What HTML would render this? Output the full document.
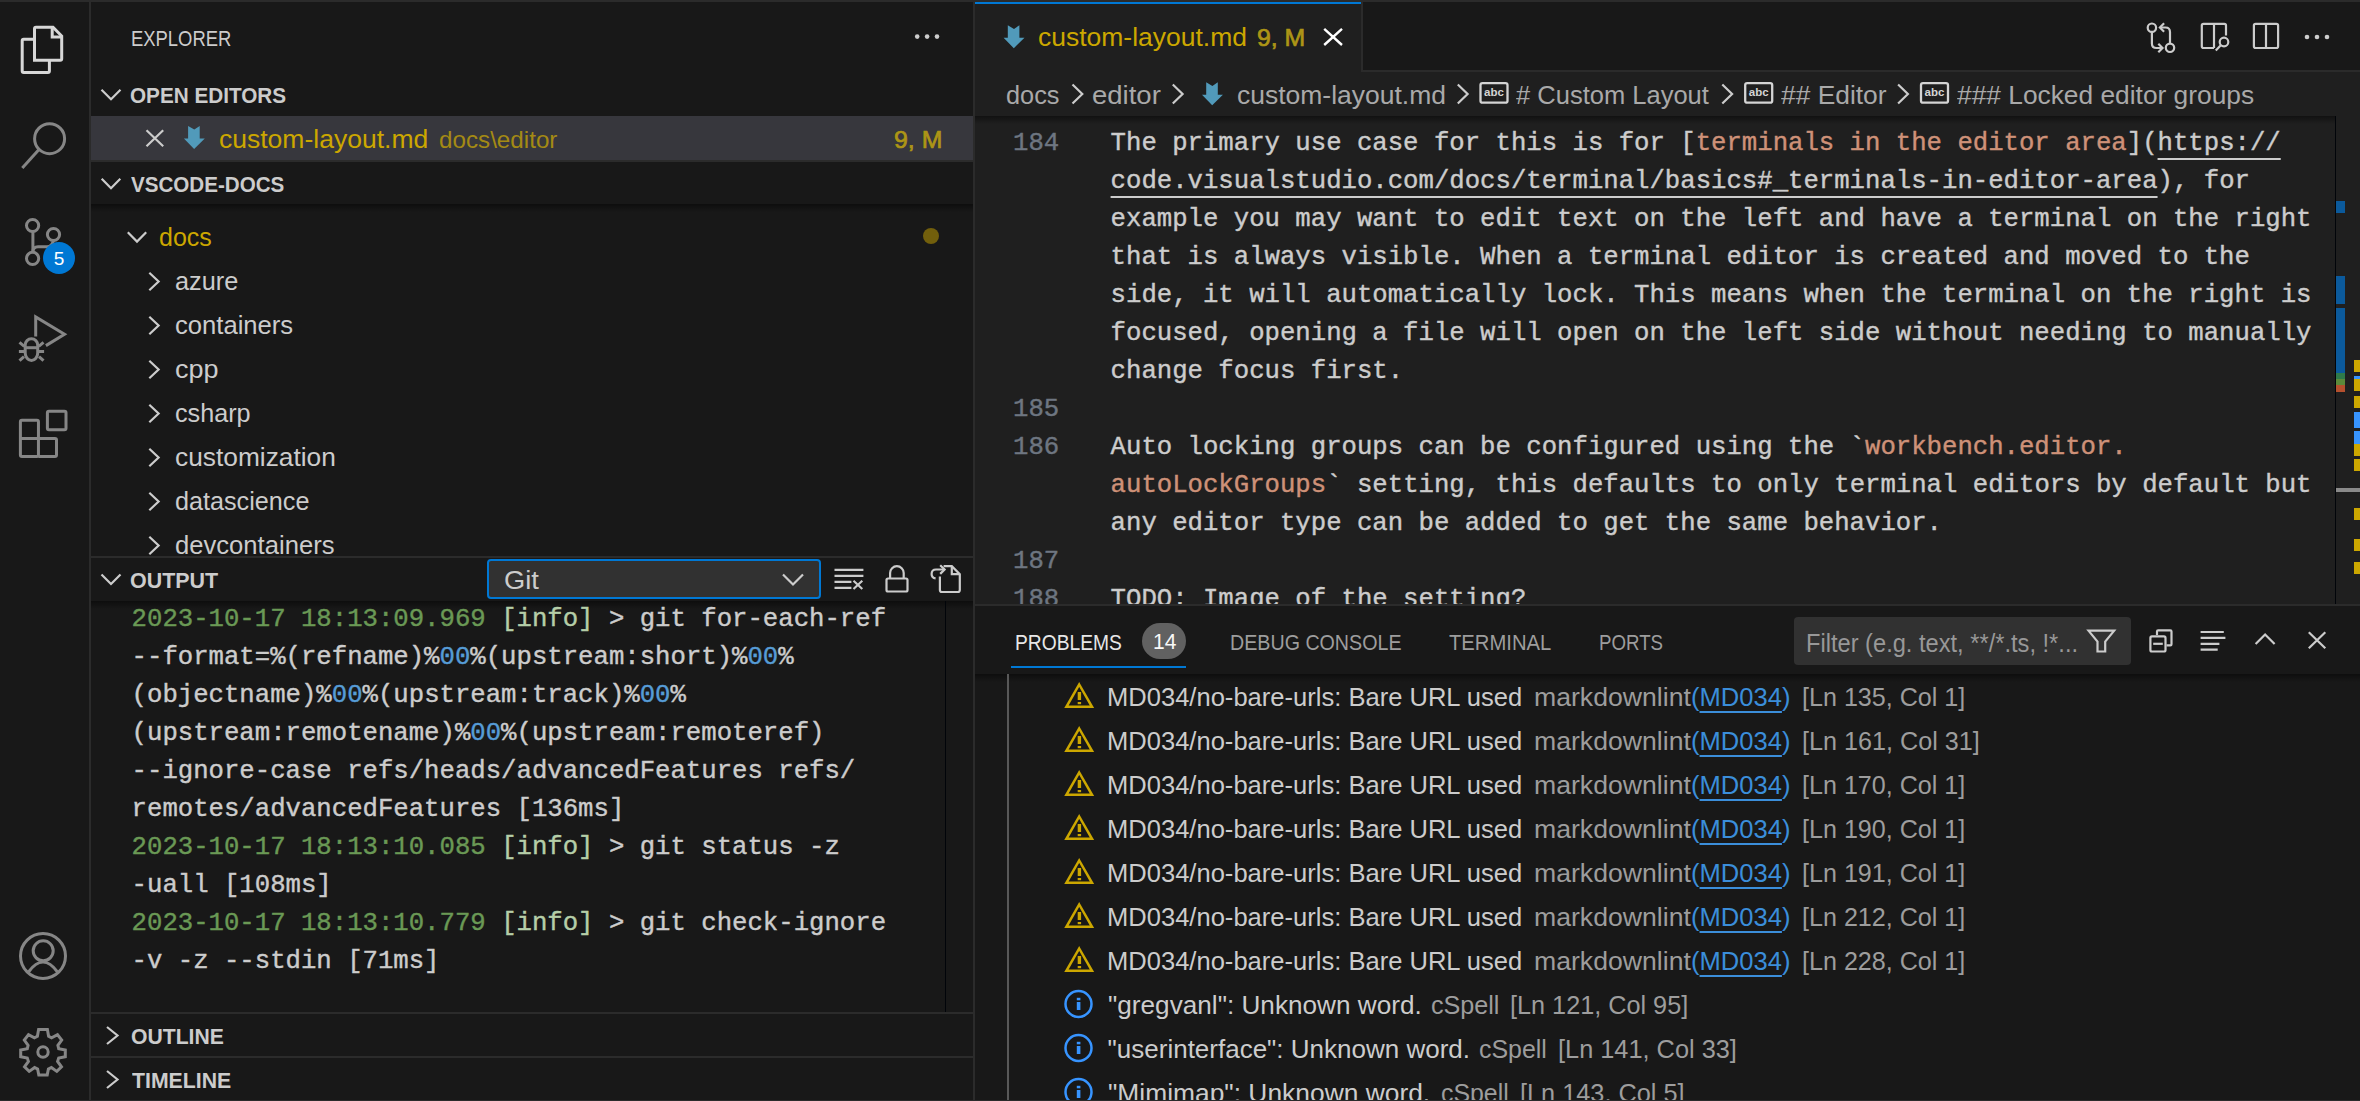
<!DOCTYPE html>
<html>
<head>
<meta charset="utf-8">
<style>
html,body{margin:0;padding:0}
body{width:2360px;height:1101px;overflow:hidden;background:#181818;position:relative;font-family:"Liberation Sans",sans-serif}
.r{position:absolute}
.t{position:absolute;white-space:pre;transform-origin:0 0}
.m{position:absolute;white-space:pre;font-family:"Liberation Mono",monospace;font-size:25.662px;line-height:38px;color:#cccccc;-webkit-text-stroke:0.4px currentColor}
.ln{color:#6e7681}
svg{position:absolute;left:0;top:0}
</style>
</head>
<body>
<!-- activity bar / top strip -->
<div class="r" style="left:0;top:0;width:2360px;height:2px;background:#2b2b2b"></div>
<div class="r" style="left:89px;top:2px;width:2px;height:1099px;background:#2b2b2b"></div>
<div class="r" style="left:973px;top:2px;width:2px;height:1099px;background:#2b2b2b"></div>

<!-- sidebar -->
<div class="r" style="left:91px;top:116px;width:882px;height:44px;background:#37373d"></div>
<div class="r" style="left:91px;top:160px;width:882px;height:2px;background:#2b2b2b"></div>
<div class="r" style="left:91px;top:204px;width:882px;height:8px;background:linear-gradient(rgba(0,0,0,0.45),rgba(0,0,0,0))"></div>
<div class="r" style="left:91px;top:556px;width:882px;height:2px;background:#2b2b2b"></div>
<div class="r" style="left:487px;top:559px;width:334px;height:40px;box-sizing:border-box;background:#313131;border:2px solid #0078d4;border-radius:4px"></div>
<div class="r" style="left:91px;top:601px;width:882px;height:8px;background:linear-gradient(rgba(0,0,0,0.45),rgba(0,0,0,0))"></div>
<div class="r" style="left:945px;top:601px;width:1px;height:411px;background:#010409"></div>
<div class="r" style="left:91px;top:1012px;width:882px;height:2px;background:#2b2b2b"></div>
<div class="r" style="left:91px;top:1056px;width:882px;height:2px;background:#2b2b2b"></div>

<!-- editor -->
<div class="r" style="left:975px;top:2px;width:386px;height:70px;background:#1f1f1f"></div>
<div class="r" style="left:975px;top:2px;width:386px;height:2px;background:#0078d4"></div>
<div class="r" style="left:1361px;top:2px;width:2px;height:70px;background:#2b2b2b"></div>
<div class="r" style="left:1363px;top:70px;width:997px;height:2px;background:#2b2b2b"></div>
<div class="r" style="left:975px;top:72px;width:1385px;height:532px;background:#1f1f1f"></div>
<div class="r" style="left:975px;top:116px;width:1360px;height:8px;background:linear-gradient(rgba(0,0,0,0.45),rgba(0,0,0,0))"></div>
<div class="r" style="left:2335px;top:116px;width:1px;height:488px;background:#010409"></div>
<!-- overview ruler marks -->
<div class="r" style="left:2336px;top:201px;width:9px;height:12px;background:#0b5a9c"></div>
<div class="r" style="left:2336px;top:276px;width:9px;height:28px;background:#0b5a9c"></div>
<div class="r" style="left:2336px;top:308px;width:9px;height:65px;background:#0b5a9c"></div>
<div class="r" style="left:2336px;top:373px;width:9px;height:6px;background:#2e7a4a"></div>
<div class="r" style="left:2336px;top:379px;width:9px;height:6px;background:#5b8a3a"></div>
<div class="r" style="left:2336px;top:385px;width:9px;height:7px;background:#b5502e"></div>
<div class="r" style="left:2354px;top:360px;width:6px;height:12px;background:#cca700"></div>
<div class="r" style="left:2354px;top:376px;width:6px;height:3px;background:#3794ff"></div>
<div class="r" style="left:2354px;top:379px;width:6px;height:12px;background:#cca700"></div>
<div class="r" style="left:2354px;top:396px;width:6px;height:12px;background:#cca700"></div>
<div class="r" style="left:2354px;top:412px;width:6px;height:16px;background:#3794ff"></div>
<div class="r" style="left:2354px;top:431px;width:6px;height:13px;background:#3794ff"></div>
<div class="r" style="left:2354px;top:444px;width:6px;height:12px;background:#cca700"></div>
<div class="r" style="left:2354px;top:459px;width:6px;height:12px;background:#cca700"></div>
<div class="r" style="left:2354px;top:508px;width:6px;height:12px;background:#cca700"></div>
<div class="r" style="left:2354px;top:539px;width:6px;height:12px;background:#cca700"></div>
<div class="r" style="left:2354px;top:562px;width:6px;height:12px;background:#cca700"></div>
<div class="r" style="left:2336px;top:488px;width:24px;height:4px;background:#8a8a8a"></div>

<!-- panel -->
<div class="r" style="left:975px;top:604px;width:1385px;height:2px;background:#2b2b2b"></div>
<div class="r" style="left:975px;top:606px;width:1385px;height:495px;background:#181818"></div>
<div class="r" style="left:1794px;top:617px;width:337px;height:48px;background:#313131;border-radius:4px"></div>
<div class="r" style="left:1011px;top:666px;width:175px;height:2px;background:#0078d4"></div>
<div class="r" style="left:1142px;top:623px;width:44px;height:36px;border-radius:18px;background:#616161"></div>
<div class="r" style="left:975px;top:674px;width:1385px;height:8px;background:linear-gradient(rgba(0,0,0,0.45),rgba(0,0,0,0))"></div>
<div class="r" style="left:1007px;top:674px;width:2px;height:427px;background:#585858"></div>

<div class="t" style="left:131.36px;top:28.30px;font-family:'Liberation Sans', sans-serif;font-size:22px;font-weight:400;line-height:22px;color:#cccccc;transform:scaleX(0.8373);">EXPLORER</div>
<div class="t" style="left:130.36px;top:85.10px;font-family:'Liberation Sans', sans-serif;font-size:22px;font-weight:700;line-height:22px;color:#cccccc;transform:scaleX(0.9412);">OPEN EDITORS</div>
<div class="t" style="left:218.58px;top:126.00px;font-family:'Liberation Sans', sans-serif;font-size:26px;font-weight:400;line-height:26px;color:#cca700;transform:scaleX(1.0197);">custom-layout.md</div>
<div class="t" style="left:438.99px;top:128.00px;font-family:'Liberation Sans', sans-serif;font-size:24px;font-weight:400;line-height:24px;color:#a48a14;transform:scaleX(1.0085);">docs\editor</div>
<div class="t" style="left:893.76px;top:127.60px;font-family:'Liberation Sans', sans-serif;font-size:24px;font-weight:400;line-height:24px;color:#ad9516;transform:scaleX(1.0364);-webkit-text-stroke:0.7px #ad9516;">9, M</div>
<div class="t" style="left:131.00px;top:173.80px;font-family:'Liberation Sans', sans-serif;font-size:22px;font-weight:700;line-height:22px;color:#cccccc;transform:scaleX(0.9362);">VSCODE-DOCS</div>
<div class="t" style="left:158.64px;top:223.60px;font-family:'Liberation Sans', sans-serif;font-size:26px;font-weight:400;line-height:26px;color:#cca700;transform:scaleX(0.9611);">docs</div>
<div class="t" style="left:174.73px;top:267.60px;font-family:'Liberation Sans', sans-serif;font-size:26px;font-weight:400;line-height:26px;color:#cccccc;transform:scaleX(0.9730);">azure</div>
<div class="t" style="left:174.72px;top:311.60px;font-family:'Liberation Sans', sans-serif;font-size:26px;font-weight:400;line-height:26px;color:#cccccc;transform:scaleX(0.9849);">containers</div>
<div class="t" style="left:174.66px;top:355.60px;font-family:'Liberation Sans', sans-serif;font-size:26px;font-weight:400;line-height:26px;color:#cccccc;transform:scaleX(1.0375);">cpp</div>
<div class="t" style="left:174.73px;top:399.60px;font-family:'Liberation Sans', sans-serif;font-size:26px;font-weight:400;line-height:26px;color:#cccccc;transform:scaleX(0.9684);">csharp</div>
<div class="t" style="left:174.69px;top:443.60px;font-family:'Liberation Sans', sans-serif;font-size:26px;font-weight:400;line-height:26px;color:#cccccc;transform:scaleX(1.0121);">customization</div>
<div class="t" style="left:174.73px;top:487.60px;font-family:'Liberation Sans', sans-serif;font-size:26px;font-weight:400;line-height:26px;color:#cccccc;transform:scaleX(0.9686);">datascience</div>
<div class="t" style="left:174.71px;top:531.60px;font-family:'Liberation Sans', sans-serif;font-size:26px;font-weight:400;line-height:26px;color:#cccccc;transform:scaleX(0.9851);">devcontainers</div>
<div class="t" style="left:130.03px;top:569.50px;font-family:'Liberation Sans', sans-serif;font-size:22px;font-weight:700;line-height:22px;color:#cccccc;transform:scaleX(0.9744);">OUTPUT</div>
<div class="t" style="left:504.35px;top:567.00px;font-family:'Liberation Sans', sans-serif;font-size:26px;font-weight:400;line-height:26px;color:#cccccc;transform:scaleX(1.0500);">Git</div>
<div class="t" style="left:131.04px;top:1026.40px;font-family:'Liberation Sans', sans-serif;font-size:22px;font-weight:700;line-height:22px;color:#cccccc;transform:scaleX(0.9621);">OUTLINE</div>
<div class="t" style="left:132.00px;top:1070.00px;font-family:'Liberation Sans', sans-serif;font-size:22px;font-weight:700;line-height:22px;color:#cccccc;transform:scaleX(0.9657);">TIMELINE</div>
<div class="t" style="left:1038.48px;top:24.00px;font-family:'Liberation Sans', sans-serif;font-size:26px;font-weight:400;line-height:26px;color:#cca700;transform:scaleX(1.0187);">custom-layout.md</div>
<div class="t" style="left:1256.97px;top:26.00px;font-family:'Liberation Sans', sans-serif;font-size:24px;font-weight:400;line-height:24px;color:#ad9516;transform:scaleX(1.0341);-webkit-text-stroke:0.7px #ad9516;">9, M</div>
<div class="t" style="left:1006.43px;top:81.90px;font-family:'Liberation Sans', sans-serif;font-size:26px;font-weight:400;line-height:26px;color:#a9a9a9;transform:scaleX(0.9741);">docs</div>
<div class="t" style="left:1091.94px;top:81.90px;font-family:'Liberation Sans', sans-serif;font-size:26px;font-weight:400;line-height:26px;color:#a9a9a9;transform:scaleX(1.0578);">editor</div>
<div class="t" style="left:1236.68px;top:81.90px;font-family:'Liberation Sans', sans-serif;font-size:26px;font-weight:400;line-height:26px;color:#a9a9a9;transform:scaleX(1.0182);">custom-layout.md</div>
<div class="t" style="left:1516.40px;top:81.90px;font-family:'Liberation Sans', sans-serif;font-size:26px;font-weight:400;line-height:26px;color:#a9a9a9;transform:scaleX(0.9812);"># Custom Layout</div>
<div class="t" style="left:1780.50px;top:81.90px;font-family:'Liberation Sans', sans-serif;font-size:26px;font-weight:400;line-height:26px;color:#a9a9a9;transform:scaleX(1.0144);">## Editor</div>
<div class="t" style="left:1956.60px;top:81.90px;font-family:'Liberation Sans', sans-serif;font-size:26px;font-weight:400;line-height:26px;color:#a9a9a9;transform:scaleX(1.0126);">### Locked editor groups</div>
<div class="t" style="left:1014.93px;top:631.50px;font-family:'Liberation Sans', sans-serif;font-size:22px;font-weight:400;line-height:22px;color:#e7e7e7;transform:scaleX(0.8744);">PROBLEMS</div>
<div class="t" style="left:1153.04px;top:631.30px;font-family:'Liberation Sans', sans-serif;font-size:22px;font-weight:400;line-height:22px;color:#f8f8f8;transform:scaleX(0.9565);">14</div>
<div class="t" style="left:1229.91px;top:631.50px;font-family:'Liberation Sans', sans-serif;font-size:22px;font-weight:400;line-height:22px;color:#9d9d9d;transform:scaleX(0.8937);">DEBUG CONSOLE</div>
<div class="t" style="left:1449.40px;top:631.50px;font-family:'Liberation Sans', sans-serif;font-size:22px;font-weight:400;line-height:22px;color:#9d9d9d;transform:scaleX(0.9198);">TERMINAL</div>
<div class="t" style="left:1599.15px;top:631.50px;font-family:'Liberation Sans', sans-serif;font-size:22px;font-weight:400;line-height:22px;color:#9d9d9d;transform:scaleX(0.8500);">PORTS</div>
<div class="t" style="left:1805.88px;top:629.70px;font-family:'Liberation Sans', sans-serif;font-size:26px;font-weight:400;line-height:26px;color:#989898;transform:scaleX(0.9095);">Filter (e.g. text, **/*.ts, !*...</div>
<div class="t" style="left:1106.63px;top:684.30px;font-family:'Liberation Sans', sans-serif;font-size:26px;font-weight:400;line-height:26px;color:#cccccc;transform:scaleX(0.9826);">MD034/no-bare-urls: Bare URL used</div>
<div class="t" style="left:1533.88px;top:684.30px;font-family:'Liberation Sans', sans-serif;font-size:26px;font-weight:400;line-height:26px;color:#9d9d9d;transform:scaleX(1.0243);">markdownlint</div>
<div class="t" style="left:1691.32px;top:684.30px;font-family:'Liberation Sans', sans-serif;font-size:26px;font-weight:400;line-height:26px;color:#3b8eda;transform:scaleX(0.9828);">(<span style="text-decoration:underline;text-underline-offset:5px;text-decoration-thickness:2px">MD034</span>)</div>
<div class="t" style="left:1802.07px;top:684.30px;font-family:'Liberation Sans', sans-serif;font-size:26px;font-weight:400;line-height:26px;color:#9d9d9d;transform:scaleX(0.9657);">[Ln 135, Col 1]</div>
<div class="t" style="left:1106.63px;top:728.30px;font-family:'Liberation Sans', sans-serif;font-size:26px;font-weight:400;line-height:26px;color:#cccccc;transform:scaleX(0.9826);">MD034/no-bare-urls: Bare URL used</div>
<div class="t" style="left:1533.88px;top:728.30px;font-family:'Liberation Sans', sans-serif;font-size:26px;font-weight:400;line-height:26px;color:#9d9d9d;transform:scaleX(1.0243);">markdownlint</div>
<div class="t" style="left:1691.32px;top:728.30px;font-family:'Liberation Sans', sans-serif;font-size:26px;font-weight:400;line-height:26px;color:#3b8eda;transform:scaleX(0.9828);">(<span style="text-decoration:underline;text-underline-offset:5px;text-decoration-thickness:2px">MD034</span>)</div>
<div class="t" style="left:1802.06px;top:728.30px;font-family:'Liberation Sans', sans-serif;font-size:26px;font-weight:400;line-height:26px;color:#9d9d9d;transform:scaleX(0.9689);">[Ln 161, Col 31]</div>
<div class="t" style="left:1106.63px;top:772.30px;font-family:'Liberation Sans', sans-serif;font-size:26px;font-weight:400;line-height:26px;color:#cccccc;transform:scaleX(0.9826);">MD034/no-bare-urls: Bare URL used</div>
<div class="t" style="left:1533.88px;top:772.30px;font-family:'Liberation Sans', sans-serif;font-size:26px;font-weight:400;line-height:26px;color:#9d9d9d;transform:scaleX(1.0243);">markdownlint</div>
<div class="t" style="left:1691.32px;top:772.30px;font-family:'Liberation Sans', sans-serif;font-size:26px;font-weight:400;line-height:26px;color:#3b8eda;transform:scaleX(0.9828);">(<span style="text-decoration:underline;text-underline-offset:5px;text-decoration-thickness:2px">MD034</span>)</div>
<div class="t" style="left:1802.07px;top:772.30px;font-family:'Liberation Sans', sans-serif;font-size:26px;font-weight:400;line-height:26px;color:#9d9d9d;transform:scaleX(0.9657);">[Ln 170, Col 1]</div>
<div class="t" style="left:1106.63px;top:816.30px;font-family:'Liberation Sans', sans-serif;font-size:26px;font-weight:400;line-height:26px;color:#cccccc;transform:scaleX(0.9826);">MD034/no-bare-urls: Bare URL used</div>
<div class="t" style="left:1533.88px;top:816.30px;font-family:'Liberation Sans', sans-serif;font-size:26px;font-weight:400;line-height:26px;color:#9d9d9d;transform:scaleX(1.0243);">markdownlint</div>
<div class="t" style="left:1691.32px;top:816.30px;font-family:'Liberation Sans', sans-serif;font-size:26px;font-weight:400;line-height:26px;color:#3b8eda;transform:scaleX(0.9828);">(<span style="text-decoration:underline;text-underline-offset:5px;text-decoration-thickness:2px">MD034</span>)</div>
<div class="t" style="left:1802.07px;top:816.30px;font-family:'Liberation Sans', sans-serif;font-size:26px;font-weight:400;line-height:26px;color:#9d9d9d;transform:scaleX(0.9657);">[Ln 190, Col 1]</div>
<div class="t" style="left:1106.63px;top:860.30px;font-family:'Liberation Sans', sans-serif;font-size:26px;font-weight:400;line-height:26px;color:#cccccc;transform:scaleX(0.9826);">MD034/no-bare-urls: Bare URL used</div>
<div class="t" style="left:1533.88px;top:860.30px;font-family:'Liberation Sans', sans-serif;font-size:26px;font-weight:400;line-height:26px;color:#9d9d9d;transform:scaleX(1.0243);">markdownlint</div>
<div class="t" style="left:1691.32px;top:860.30px;font-family:'Liberation Sans', sans-serif;font-size:26px;font-weight:400;line-height:26px;color:#3b8eda;transform:scaleX(0.9828);">(<span style="text-decoration:underline;text-underline-offset:5px;text-decoration-thickness:2px">MD034</span>)</div>
<div class="t" style="left:1802.07px;top:860.30px;font-family:'Liberation Sans', sans-serif;font-size:26px;font-weight:400;line-height:26px;color:#9d9d9d;transform:scaleX(0.9657);">[Ln 191, Col 1]</div>
<div class="t" style="left:1106.63px;top:904.30px;font-family:'Liberation Sans', sans-serif;font-size:26px;font-weight:400;line-height:26px;color:#cccccc;transform:scaleX(0.9826);">MD034/no-bare-urls: Bare URL used</div>
<div class="t" style="left:1533.88px;top:904.30px;font-family:'Liberation Sans', sans-serif;font-size:26px;font-weight:400;line-height:26px;color:#9d9d9d;transform:scaleX(1.0243);">markdownlint</div>
<div class="t" style="left:1691.32px;top:904.30px;font-family:'Liberation Sans', sans-serif;font-size:26px;font-weight:400;line-height:26px;color:#3b8eda;transform:scaleX(0.9828);">(<span style="text-decoration:underline;text-underline-offset:5px;text-decoration-thickness:2px">MD034</span>)</div>
<div class="t" style="left:1802.07px;top:904.30px;font-family:'Liberation Sans', sans-serif;font-size:26px;font-weight:400;line-height:26px;color:#9d9d9d;transform:scaleX(0.9657);">[Ln 212, Col 1]</div>
<div class="t" style="left:1106.63px;top:948.30px;font-family:'Liberation Sans', sans-serif;font-size:26px;font-weight:400;line-height:26px;color:#cccccc;transform:scaleX(0.9826);">MD034/no-bare-urls: Bare URL used</div>
<div class="t" style="left:1533.88px;top:948.30px;font-family:'Liberation Sans', sans-serif;font-size:26px;font-weight:400;line-height:26px;color:#9d9d9d;transform:scaleX(1.0243);">markdownlint</div>
<div class="t" style="left:1691.32px;top:948.30px;font-family:'Liberation Sans', sans-serif;font-size:26px;font-weight:400;line-height:26px;color:#3b8eda;transform:scaleX(0.9828);">(<span style="text-decoration:underline;text-underline-offset:5px;text-decoration-thickness:2px">MD034</span>)</div>
<div class="t" style="left:1802.07px;top:948.30px;font-family:'Liberation Sans', sans-serif;font-size:26px;font-weight:400;line-height:26px;color:#9d9d9d;transform:scaleX(0.9657);">[Ln 228, Col 1]</div>
<div class="t" style="left:1107.59px;top:992.30px;font-family:'Liberation Sans', sans-serif;font-size:26px;font-weight:400;line-height:26px;color:#cccccc;transform:scaleX(1.0061);">"gregvanl": Unknown word.</div>
<div class="t" style="left:1430.73px;top:992.30px;font-family:'Liberation Sans', sans-serif;font-size:26px;font-weight:400;line-height:26px;color:#9d9d9d;transform:scaleX(0.9667);">cSpell</div>
<div class="t" style="left:1510.36px;top:992.30px;font-family:'Liberation Sans', sans-serif;font-size:26px;font-weight:400;line-height:26px;color:#9d9d9d;transform:scaleX(0.9706);">[Ln 121, Col 95]</div>
<div class="t" style="left:1107.60px;top:1036.30px;font-family:'Liberation Sans', sans-serif;font-size:26px;font-weight:400;line-height:26px;color:#cccccc;">"userinterface": Unknown word.</div>
<div class="t" style="left:1479.34px;top:1036.30px;font-family:'Liberation Sans', sans-serif;font-size:26px;font-weight:400;line-height:26px;color:#9d9d9d;transform:scaleX(0.9580);">cSpell</div>
<div class="t" style="left:1558.35px;top:1036.30px;font-family:'Liberation Sans', sans-serif;font-size:26px;font-weight:400;line-height:26px;color:#9d9d9d;transform:scaleX(0.9744);">[Ln 141, Col 33]</div>
<div class="t" style="left:1107.59px;top:1080.30px;font-family:'Liberation Sans', sans-serif;font-size:26px;font-weight:400;line-height:26px;color:#cccccc;transform:scaleX(1.0146);">"Mimimap": Unknown word.</div>
<div class="t" style="left:1441.04px;top:1080.30px;font-family:'Liberation Sans', sans-serif;font-size:26px;font-weight:400;line-height:26px;color:#9d9d9d;transform:scaleX(0.9565);">cSpell</div>
<div class="t" style="left:1520.05px;top:1080.30px;font-family:'Liberation Sans', sans-serif;font-size:26px;font-weight:400;line-height:26px;color:#9d9d9d;transform:scaleX(0.9735);">[Ln 143, Col 5]</div>
<div class="r" style="left:91px;top:602px;width:854px;height:410px;overflow:hidden">
<div class="m" style="left:40.60px;top:-0.70px;color:#cccccc"><span style="color:#6a9955">2023-10-17 18:13:09.969</span> <span style="color:#b5cea8">[info]</span> &gt; git for-each-ref</div>
<div class="m" style="left:40.60px;top:37.30px;color:#cccccc">--format=%(refname)%<span style="color:#569cd6">00</span>%(upstream:short)%<span style="color:#569cd6">00</span>%</div>
<div class="m" style="left:40.60px;top:75.30px;color:#cccccc">(objectname)%<span style="color:#569cd6">00</span>%(upstream:track)%<span style="color:#569cd6">00</span>%</div>
<div class="m" style="left:40.60px;top:113.30px;color:#cccccc">(upstream:remotename)%<span style="color:#569cd6">00</span>%(upstream:remoteref)</div>
<div class="m" style="left:40.60px;top:151.30px;color:#cccccc">--ignore-case refs/heads/advancedFeatures refs/</div>
<div class="m" style="left:40.60px;top:189.30px;color:#cccccc">remotes/advancedFeatures [136ms]</div>
<div class="m" style="left:40.60px;top:227.30px;color:#cccccc"><span style="color:#6a9955">2023-10-17 18:13:10.085</span> <span style="color:#b5cea8">[info]</span> &gt; git status -z</div>
<div class="m" style="left:40.60px;top:265.30px;color:#cccccc">-uall [108ms]</div>
<div class="m" style="left:40.60px;top:303.30px;color:#cccccc"><span style="color:#6a9955">2023-10-17 18:13:10.779</span> <span style="color:#b5cea8">[info]</span> &gt; git check-ignore</div>
<div class="m" style="left:40.60px;top:341.30px;color:#cccccc">-v -z --stdin [71ms]</div>
</div>
<div class="r" style="left:975px;top:116px;width:1360px;height:488px;overflow:hidden">
<div class="m ln" style="left:38.00px;top:9.30px">184</div>
<div class="m" style="left:135.60px;top:9.30px">The primary use case for this is for [<span style="color:#ce9178">terminals in the editor area</span>](<span style="text-decoration:underline;text-decoration-thickness:2px;text-underline-offset:8px">https://</span></div>
<div class="m" style="left:135.60px;top:47.30px"><span style="text-decoration:underline;text-decoration-thickness:2px;text-underline-offset:8px">code.visualstudio.com/docs/terminal/basics#_terminals-in-editor-area</span>), for</div>
<div class="m" style="left:135.60px;top:85.30px">example you may want to edit text on the left and have a terminal on the right</div>
<div class="m" style="left:135.60px;top:123.30px">that is always visible. When a terminal editor is created and moved to the</div>
<div class="m" style="left:135.60px;top:161.30px">side, it will automatically lock. This means when the terminal on the right is</div>
<div class="m" style="left:135.60px;top:199.30px">focused, opening a file will open on the left side without needing to manually</div>
<div class="m" style="left:135.60px;top:237.30px">change focus first.</div>
<div class="m ln" style="left:38.00px;top:275.30px">185</div>
<div class="m ln" style="left:38.00px;top:313.30px">186</div>
<div class="m" style="left:135.60px;top:313.30px">Auto locking groups can be configured using the `<span style="color:#ce9178">workbench.editor.</span></div>
<div class="m" style="left:135.60px;top:351.30px"><span style="color:#ce9178">autoLockGroups</span>` setting, this defaults to only terminal editors by default but</div>
<div class="m" style="left:135.60px;top:389.30px">any editor type can be added to get the same behavior.</div>
<div class="m ln" style="left:38.00px;top:427.30px">187</div>
<div class="m ln" style="left:38.00px;top:465.30px">188</div>
<div class="m" style="left:135.60px;top:465.30px">TODO: Image of the setting?</div>
</div>
<svg width="2360" height="1101" viewBox="0 0 2360 1101" fill="none" stroke-linecap="butt" stroke-linejoin="miter">
<!-- activity bar icons -->
<g stroke="#d7d7d7" stroke-width="3">
  <path d="M34.5,60.3 V28.8 Q34.5,27.3 36,27.3 H53 L61.7,36 V58.8 Q61.7,60.3 60.2,60.3 Z"/>
  <path d="M52.2,27.3 V37 H61.7"/>
  <path d="M34.5,39.3 H23.7 Q22.2,39.3 22.2,40.8 V71.1 Q22.2,72.6 23.7,72.6 H47.9 Q49.4,72.6 49.4,71.1 V60.3"/>
</g>
<g stroke="#868686" stroke-width="3">
  <circle cx="49.6" cy="138.7" r="15"/>
  <path d="M39,149.5 L22.3,168"/>
  <circle cx="32.6" cy="225.5" r="6.1"/>
  <circle cx="53.5" cy="234.5" r="6.1"/>
  <circle cx="32.6" cy="258.4" r="6.1"/>
  <path d="M32.9,231.6 V252.3"/>
  <path d="M32.9,252 Q32.9,246.8 38,246.8 H47 Q52,246.8 53.5,240.6"/>
  <path d="M35.7,336.5 V317 L64.5,334.3 L45.9,345.6"/>
  <path d="M25.2,347.7 V345 A6.25,6.25 0 0 1 37.7,345 V353 A6.25,7.5 0 0 1 25.2,353 Z"/>
  <path d="M25.2,347.7 H37.7"/>
  <path d="M19.5,342.3 L24.3,346.3 M43.5,342.3 L38.7,346.3 M18.9,351.5 H24.3 M44.1,351.5 H38.7 M19.5,360.7 L24,356.6 M43.5,360.7 L39,356.6"/>
  <path d="M20.4,438.5 V421.7 Q20.4,420.2 21.9,420.2 H36.9 Q38.45,420.2 38.45,421.7 V454.9 Q38.45,456.4 36.9,456.4 H21.9 Q20.4,456.4 20.4,454.9 Z"/>
  <path d="M20.4,438.5 H55 Q56.5,438.5 56.5,440 V454.9 Q56.5,456.4 55,456.4 H38.45"/>
  <rect x="47.4" y="411.3" width="18.6" height="18.4" rx="1.5"/>
  <circle cx="43" cy="956" r="22.5"/>
  <circle cx="43.2" cy="950.8" r="10"/>
  <path d="M28.5,972 Q43,952 57.5,972"/>
  <path id="gear" d="M38.6,1029.5 H47.4 L48.6,1036.2 L51.6,1037.9 L57.5,1034.6 L61.7,1040.1 L57.9,1045.4 L58.7,1048.7 L65.3,1050 V1056.8 L58.7,1058.1 L57.6,1061.4 L61.5,1066.8 L56.8,1071.4 L51.4,1067.6 L48.4,1069 L47.2,1075 H38.8 L37.6,1069 L34.6,1067.6 L29.2,1071.4 L24.5,1066.8 L28.4,1061.4 L27.3,1058.1 L20.7,1056.8 V1050 L27.3,1048.7 L28.1,1045.4 L24.3,1040.1 L28.5,1034.6 L34.4,1037.9 L37.4,1036.2 Z"/>
  <circle cx="43" cy="1052" r="5.2"/>
</g>
<circle cx="59" cy="258" r="16" fill="#0078d4"/>
<text x="59" y="265" fill="#ffffff" font-family="Liberation Sans" font-size="19" font-weight="400" text-anchor="middle">5</text>

<!-- sidebar icons -->
<g stroke="#cccccc" stroke-width="2.2">
  <path d="M917,36.6 h0.1 M927,36.6 h0.1 M937,36.6 h0.1" stroke-width="0"/>
  <path d="M101.5,89.8 L111,99.3 L120.5,89.8"/>
  <path d="M101.7,178.8 L111,188.3 L120.3,178.8"/>
  <path d="M127.8,232.3 L137,241.6 L146.2,232.3"/>
  <path d="M149.3,272.8 L158.6,281.5 L149.3,290.2"/>
  <path d="M149.3,316.8 L158.6,325.5 L149.3,334.2"/>
  <path d="M149.3,360.8 L158.6,369.5 L149.3,378.2"/>
  <path d="M149.3,404.8 L158.6,413.5 L149.3,422.2"/>
  <path d="M149.3,448.8 L158.6,457.5 L149.3,466.2"/>
  <path d="M149.3,492.8 L158.6,501.5 L149.3,510.2"/>
  <path d="M149.3,536.8 L158.6,545.5 L149.3,554.2"/>
  <path d="M101.5,574.5 L111,584 L120.5,574.5"/>
  <path d="M107,1027 L117.5,1035.5 L107,1044"/>
  <path d="M107,1071 L117.5,1079.5 L107,1088"/>
  <path d="M146.5,130.2 L163.2,146.3 M163.2,130.2 L146.5,146.3"/>
  <path d="M783,574.5 L793,584.5 L803,574.5"/>
  <path d="M834.5,569.8 H863.4 M834.5,575.8 H863.4 M834.5,581.8 H851.4 M834.5,587.9 H851.4"/>
  <path d="M853.5,580.8 L862.3,589 M862.3,580.8 L853.5,589"/>
  <path d="M890.1,578.5 V573 A6.8,6.8 0 0 1 903.7,573 V578.5"/>
  <rect x="886.5" y="578.5" width="21" height="13" rx="1.5"/>
  <path d="M939.9,576.6 V590 Q939.9,592 941.9,592 H957.8 Q959.8,592 959.8,590 V574.1 L951.8,566.1 H943.6"/>
  <path d="M951.8,566.1 V574.1 H959.8"/>
  <path d="M935.6,578.4 Q931.6,578 931.6,574 Q931.6,569.5 936,569.5 H944.5"/>
  <path d="M940.2,565.2 L944.6,569.5 L940.2,573.9"/>
</g>
<g fill="#cccccc">
  <circle cx="917.2" cy="36.6" r="2.3"/>
  <circle cx="927.1" cy="36.6" r="2.3"/>
  <circle cx="937" cy="36.6" r="2.3"/>
</g>
<circle cx="931" cy="236" r="8" fill="#725f0c"/>

<!-- markdown icons -->
<g fill="#519aba">
  <path d="M188.1,126.0 L194.3,129.6 L199.7,126.0 L199.7,138.4 L204.8,138.4 L194.1,148.9 L183.9,138.4 L188.1,138.4 Z"/>
  <path d="M1007.8,25.3 L1014.0,28.9 L1019.4,25.3 L1019.4,37.7 L1024.5,37.7 L1013.8,48.2 L1003.6,37.7 L1007.8,37.7 Z"/>
  <path d="M1206.2,82.3 L1212.4,85.9 L1217.8,82.3 L1217.8,94.7 L1222.9,94.7 L1212.2,105.2 L1202.0,94.7 L1206.2,94.7 Z"/>
</g>

<!-- tab close + tab bar actions -->
<g stroke="#ffffff" stroke-width="2.4">
  <path d="M1324.2,28.8 L1342,45 M1342,28.8 L1324.2,45"/>
</g>
<g stroke="#cccccc" stroke-width="2.2">
  <circle cx="2151.9" cy="27.7" r="4.2"/>
  <circle cx="2170" cy="47.8" r="4.2"/>
  <path d="M2151.9,32 V43.5 Q2151.9,48 2156.4,48 H2161.5"/>
  <path d="M2158.3,43.8 L2162.5,48 L2158.3,52.2"/>
  <path d="M2170,43.5 V32 Q2170,27.5 2165.5,27.5 H2160"/>
  <path d="M2164.1,23.3 L2159.9,27.5 L2164.1,31.7"/>
  <path d="M2226,35.5 V25.5 Q2226,23.8 2224.3,23.8 H2203.5 Q2201.8,23.8 2201.8,25.5 V46.3 Q2201.8,48 2203.5,48 H2214"/>
  <path d="M2214,23.8 V48"/>
  <circle cx="2224" cy="42" r="4.3"/>
  <path d="M2220.8,45.2 L2215.8,50.4"/>
  <rect x="2253.9" y="23.8" width="24.2" height="24.2" rx="1.7"/>
  <path d="M2266,23.8 V48"/>
  <path d="M1072.5,84.5 L1082.3,94 L1072.5,103.5"/>
  <path d="M1172.8,84.5 L1182.6,94 L1172.8,103.5"/>
  <path d="M1457.8,84.5 L1467.6,94 L1457.8,103.5"/>
  <path d="M1722.3,84.5 L1732.1,94 L1722.3,103.5"/>
  <path d="M1898.1,84.5 L1907.9,94 L1898.1,103.5"/>
</g>
<g fill="#cccccc">
  <circle cx="2307" cy="37" r="2.3"/>
  <circle cx="2317" cy="37" r="2.3"/>
  <circle cx="2327" cy="37" r="2.3"/>
</g>
<g stroke="#d4d4d4" stroke-width="2.3">
  <rect x="1480.5" y="83.1" width="27" height="19.6" rx="2"/>
  <rect x="1745.2" y="83.1" width="27" height="19.6" rx="2"/>
  <rect x="1921" y="83.1" width="27" height="19.6" rx="2"/>
</g>
<g fill="#d4d4d4" font-family="Liberation Sans" font-size="11.5" font-weight="700" text-anchor="middle">
  <text x="1494" y="96">abc</text>
  <text x="1758.7" y="96">abc</text>
  <text x="1934.5" y="96">abc</text>
</g>

<!-- panel actions -->
<g stroke="#cccccc" stroke-width="2.2">
  <path d="M2088.5,630.6 H2114.2 L2105.2,641.6 V651.5 H2097.5 V641.6 Z"/>
  <path d="M2157,635 V631.5 Q2157,630.4 2158.1,630.4 H2170.4 Q2171.5,630.4 2171.5,631.5 V644.2 Q2171.5,645.3 2170.4,645.3 H2166.5"/>
  <rect x="2150.4" y="636.4" width="15.1" height="15.1" rx="1.5"/>
  <path d="M2153.2,643.8 H2162.8"/>
  <path d="M2200.6,632 H2223.8 M2200.6,637.8 H2225.4 M2200.6,643.8 H2219.4 M2200.6,649.7 H2217.7"/>
  <path d="M2255.6,644 L2265.1,634.5 L2274.6,644"/>
  <path d="M2308.8,632.2 L2325.3,648.2 M2325.3,632.2 L2308.8,648.2"/>
</g>

<!-- problem icons -->
<g stroke="#cca700" stroke-width="2.5" stroke-linejoin="miter">
  <path d="M1079.2,684.5 L1092,706.8 H1066.4 Z"/>
  <path d="M1079.2,728.5 L1092,750.8 H1066.4 Z"/>
  <path d="M1079.2,772.5 L1092,794.8 H1066.4 Z"/>
  <path d="M1079.2,816.5 L1092,838.8 H1066.4 Z"/>
  <path d="M1079.2,860.5 L1092,882.8 H1066.4 Z"/>
  <path d="M1079.2,904.5 L1092,926.8 H1066.4 Z"/>
  <path d="M1079.2,948.5 L1092,970.8 H1066.4 Z"/>
</g>
<g fill="#cca700">
  <rect x="1077.7" y="692" width="3.4" height="8"/><rect x="1077.7" y="702" width="3.4" height="2.2"/>
  <rect x="1077.7" y="736" width="3.4" height="8"/><rect x="1077.7" y="746" width="3.4" height="2.2"/>
  <rect x="1077.7" y="780" width="3.4" height="8"/><rect x="1077.7" y="790" width="3.4" height="2.2"/>
  <rect x="1077.7" y="824" width="3.4" height="8"/><rect x="1077.7" y="834" width="3.4" height="2.2"/>
  <rect x="1077.7" y="868" width="3.4" height="8"/><rect x="1077.7" y="878" width="3.4" height="2.2"/>
  <rect x="1077.7" y="912" width="3.4" height="8"/><rect x="1077.7" y="922" width="3.4" height="2.2"/>
  <rect x="1077.7" y="956" width="3.4" height="8"/><rect x="1077.7" y="966" width="3.4" height="2.2"/>
</g>
<g stroke="#3794ff" stroke-width="2.5">
  <circle cx="1078.5" cy="1004" r="13"/>
  <circle cx="1078.5" cy="1048" r="13"/>
  <circle cx="1078.5" cy="1092" r="13"/>
</g>
<g fill="#3794ff">
  <rect x="1076.8" y="1002" width="3.6" height="8"/><rect x="1076.8" y="997.8" width="3.6" height="2.5"/>
  <rect x="1076.8" y="1046" width="3.6" height="8"/><rect x="1076.8" y="1041.8" width="3.6" height="2.5"/>
  <rect x="1076.8" y="1090" width="3.6" height="8"/><rect x="1076.8" y="1085.8" width="3.6" height="2.5"/>
</g>
</svg>

<div class="r" style="left:0;top:1100px;width:2360px;height:1px;background:#2b2b2b"></div>
</body>
</html>
